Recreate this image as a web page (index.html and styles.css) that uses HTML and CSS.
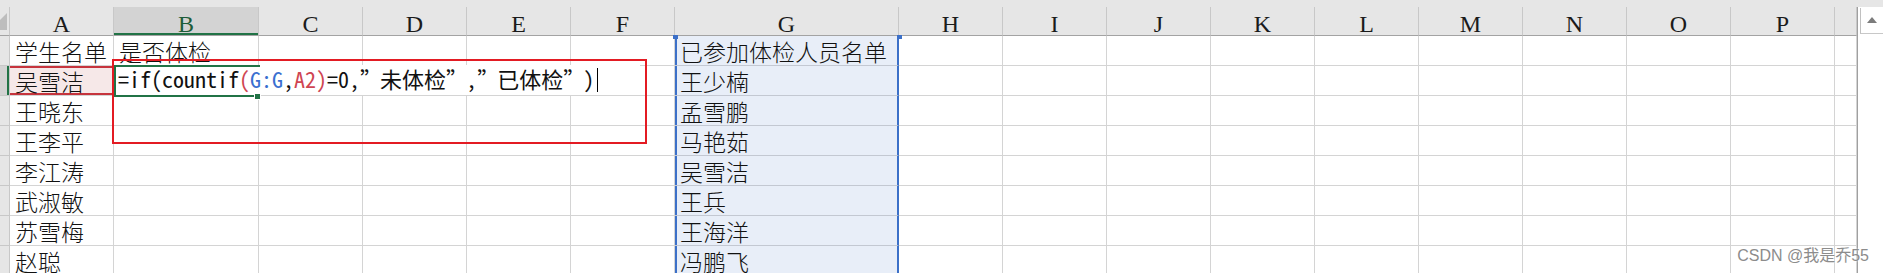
FILE: index.html
```html
<!DOCTYPE html>
<html lang="zh-CN">
  <head>
    <title>是否体检</title>
    <meta charset="utf-8" />
    <link rel="stylesheet" href="styles.css">
  </head>
  <body>
    <div class="window">
      <div class="topband"></div>
      <div class="main">
        <div class="sheet">
          <div class="row heads">
            <div class="corner">
              <svg width="10" height="29" viewBox="0 0 10 29">
                <polygon points="7,6 7,23 -10,23" fill="#bdbdbd" />
              </svg>
            </div>
            <div class="ch">A</div>
            <div class="ch on">B</div>
            <div class="ch">C</div>
            <div class="ch">D</div>
            <div class="ch">E</div>
            <div class="ch">F</div>
            <div class="ch">G</div>
            <div class="ch">H</div>
            <div class="ch">I</div>
            <div class="ch">J</div>
            <div class="ch">K</div>
            <div class="ch">L</div>
            <div class="ch">M</div>
            <div class="ch">N</div>
            <div class="ch">O</div>
            <div class="ch">P</div>
            <div class="ch"></div>
          </div>

          <div class="row">
            <div class="rh"></div>
            <div class="c">学生名单</div>
            <div class="c">是否体检</div>
            <div class="c"></div><div class="c"></div><div class="c"></div><div class="c"></div>
            <div class="c sel top">已参加体检人员名单</div>
            <div class="c"></div><div class="c"></div><div class="c"></div><div class="c"></div><div class="c"></div>
            <div class="c"></div><div class="c"></div><div class="c"></div><div class="c"></div>
            <div class="c"></div>
          </div>

          <div class="row">
            <div class="rh on"></div>
            <div class="c ref">吴雪洁</div>
            <div class="c active">
              <div class="edit">=if(countif<span class="r">(</span><span class="b">G:G</span>,<span class="r">A2)</span>=0,<span class="q">”</span>未体检<span class="q">”</span>,<span class="q">”</span>已体检<span class="q">”</span>)<span class="caret"></span></div>
            </div>
            <div class="c"></div><div class="c"></div><div class="c"></div><div class="c"></div>
            <div class="c sel">王少楠</div>
            <div class="c"></div><div class="c"></div><div class="c"></div><div class="c"></div><div class="c"></div>
            <div class="c"></div><div class="c"></div><div class="c"></div><div class="c"></div>
            <div class="c"></div>
          </div>

          <div class="row">
            <div class="rh"></div>
            <div class="c">王晓东</div>
            <div class="c"></div>
            <div class="c"></div><div class="c"></div><div class="c"></div><div class="c"></div>
            <div class="c sel">孟雪鹏</div>
            <div class="c"></div><div class="c"></div><div class="c"></div><div class="c"></div><div class="c"></div>
            <div class="c"></div><div class="c"></div><div class="c"></div><div class="c"></div>
            <div class="c"></div>
          </div>

          <div class="row">
            <div class="rh"></div>
            <div class="c">王李平</div>
            <div class="c"></div>
            <div class="c"></div><div class="c"></div><div class="c"></div><div class="c"></div>
            <div class="c sel">马艳茹</div>
            <div class="c"></div><div class="c"></div><div class="c"></div><div class="c"></div><div class="c"></div>
            <div class="c"></div><div class="c"></div><div class="c"></div><div class="c"></div>
            <div class="c"></div>
          </div>

          <div class="row">
            <div class="rh"></div>
            <div class="c">李江涛</div>
            <div class="c"></div>
            <div class="c"></div><div class="c"></div><div class="c"></div><div class="c"></div>
            <div class="c sel">吴雪洁</div>
            <div class="c"></div><div class="c"></div><div class="c"></div><div class="c"></div><div class="c"></div>
            <div class="c"></div><div class="c"></div><div class="c"></div><div class="c"></div>
            <div class="c"></div>
          </div>

          <div class="row">
            <div class="rh"></div>
            <div class="c">武淑敏</div>
            <div class="c"></div>
            <div class="c"></div><div class="c"></div><div class="c"></div><div class="c"></div>
            <div class="c sel">王兵</div>
            <div class="c"></div><div class="c"></div><div class="c"></div><div class="c"></div><div class="c"></div>
            <div class="c"></div><div class="c"></div><div class="c"></div><div class="c"></div>
            <div class="c"></div>
          </div>

          <div class="row">
            <div class="rh"></div>
            <div class="c">苏雪梅</div>
            <div class="c"></div>
            <div class="c"></div><div class="c"></div><div class="c"></div><div class="c"></div>
            <div class="c sel">王海洋</div>
            <div class="c"></div><div class="c"></div><div class="c"></div><div class="c"></div><div class="c"></div>
            <div class="c"></div><div class="c"></div><div class="c"></div><div class="c"></div>
            <div class="c"></div>
          </div>

          <div class="row">
            <div class="rh"></div>
            <div class="c">赵聪</div>
            <div class="c"></div>
            <div class="c"></div><div class="c"></div><div class="c"></div><div class="c"></div>
            <div class="c sel">冯鹏飞</div>
            <div class="c"></div><div class="c"></div><div class="c"></div><div class="c"></div><div class="c"></div>
            <div class="c"></div><div class="c"></div><div class="c"></div><div class="c"></div>
            <div class="c"></div>
          </div>

          <div class="note"></div>
        </div>
        <div class="scrollbar">
          <div class="arrow"></div>
        </div>
      </div>
      <div class="watermark">CSDN @我是乔55</div>
    </div>
  </body>
</html>
```

FILE: styles.css
```css
html {
  box-sizing: border-box;
}
*,
*::before,
*::after {
  box-sizing: inherit;
}
body {
  margin: 0;
  background: #fff;
  color: #111;
  font-family: "Noto Sans CJK SC", sans-serif;
  overflow: hidden;
}
.window {
  position: relative;
  width: 1883px;
  height: 273px;
  overflow: hidden;
}
.topband {
  height: 7px;
  background: #e6e6e6;
}
.main {
  display: flex;
}
.sheet {
  position: relative;
  flex: 1;
}
.row {
  display: grid;
  grid-template-columns: 10px 104px 145px repeat(4, 104px) 224px repeat(9, 104px) 22px;
  grid-template-rows: 30px;
}
.heads {
  grid-template-rows: 29px;
  background: #e6e6e6;
}
.corner {
  position: relative;
  border-right: 1px solid #c8c8c8;
  border-bottom: 1px solid #a3a3a3;
}
.corner svg {
  position: absolute;
  left: 0;
  top: 0;
}
.ch {
  padding-top: 3px;
  border-right: 1px solid #c8c8c8;
  border-bottom: 1px solid #a3a3a3;
  color: #1b1b1b;
  font: 24px/29px "Liberation Serif", serif;
  text-align: center;
}
.ch.on {
  background: #d3d3d3;
  box-shadow: inset 0 -2px #217346;
  color: #1d5c38;
}
.rh {
  background: #e6e6e6;
  border-right: 1px solid #c8c8c8;
  border-bottom: 1px solid #c8c8c8;
}
.rh.on {
  background: #d3d3d3;
  box-shadow: inset -2px 0 #217346;
}
.c {
  padding-left: 5px;
  border-right: 1px solid #d4d4d4;
  border-bottom: 1px solid #d4d4d4;
  font-size: 23px;
  font-weight: 300;
  line-height: 30px;
  white-space: nowrap;
}
.ref {
  background: #f6e8e8;
  box-shadow: inset 0 2px #c6343d, inset 0 -2px #c6343d;
}
.sel {
  background: #e8eef8;
  border-bottom-color: #c3c8d2;
  border-right: 2px solid #3c70c8;
  box-shadow: inset 2px 0 #3c70c8;
}
.sel.top {
  position: relative;
}
.sel.top::before,
.sel.top::after {
  content: "";
  position: absolute;
  top: -1px;
  width: 5px;
  height: 4px;
  background: #3c70c8;
}
.sel.top::before {
  left: -2px;
}
.sel.top::after {
  right: -5px;
}
.active {
  position: relative;
  padding: 0;
}
.active::before {
  content: "";
  position: absolute;
  z-index: 2;
  top: -1px;
  left: 0;
  width: 146px;
  height: 32px;
  border: 2px solid #217346;
  border-right: none;
}
.active::after {
  content: "";
  position: absolute;
  z-index: 2;
  left: 140px;
  top: 27px;
  width: 7px;
  height: 7px;
  background: #217346;
  border: 1px solid #fff;
}
.edit {
  position: absolute;
  z-index: 1;
  top: -1px;
  left: 2px;
  width: 524px;
  height: 30px;
  padding-left: 2px;
  background: #fff;
  color: #111;
  font-family: "Noto Sans Mono CJK SC", "Liberation Mono", "Noto Sans CJK SC", monospace;
  font-size: 22px;
  font-weight: 300;
  line-height: 27px;
  white-space: nowrap;
}
.edit .r {
  color: #cf4552;
}
.edit .b {
  color: #3a6fd0;
}
.edit .q {
  display: inline-block;
  width: 20px;
  text-align: center;
}
.caret {
  display: inline-block;
  width: 1px;
  height: 24px;
  margin-left: 3px;
  background: #000;
  vertical-align: -4px;
}
.note {
  position: absolute;
  z-index: 3;
  left: 112px;
  top: 52px;
  width: 535px;
  height: 85px;
  border: 2px solid #e31b23;
}
.scrollbar {
  width: 26px;
  background: #fff;
  border-left: 1px solid #a0a0a0;
}
.arrow {
  position: relative;
  height: 26px;
  margin-top: 1px;
  margin-left: 2px;
  border-left: 1px solid #c0c0c0;
  border-bottom: 1px solid #c8c8c8;
  background: #fff;
}
.arrow::after {
  content: "";
  position: absolute;
  left: 6px;
  top: 9px;
  border-left: 5px solid transparent;
  border-right: 5px solid transparent;
  border-bottom: 6px solid #7c7c7c;
}
.watermark {
  position: absolute;
  right: 14px;
  bottom: 8px;
  color: #8c8c8c;
  font-family: "Liberation Sans", "Noto Sans CJK SC", sans-serif;
  font-size: 16px;
  line-height: 18px;
  text-shadow: 0 0 2px #fff;
}
```
